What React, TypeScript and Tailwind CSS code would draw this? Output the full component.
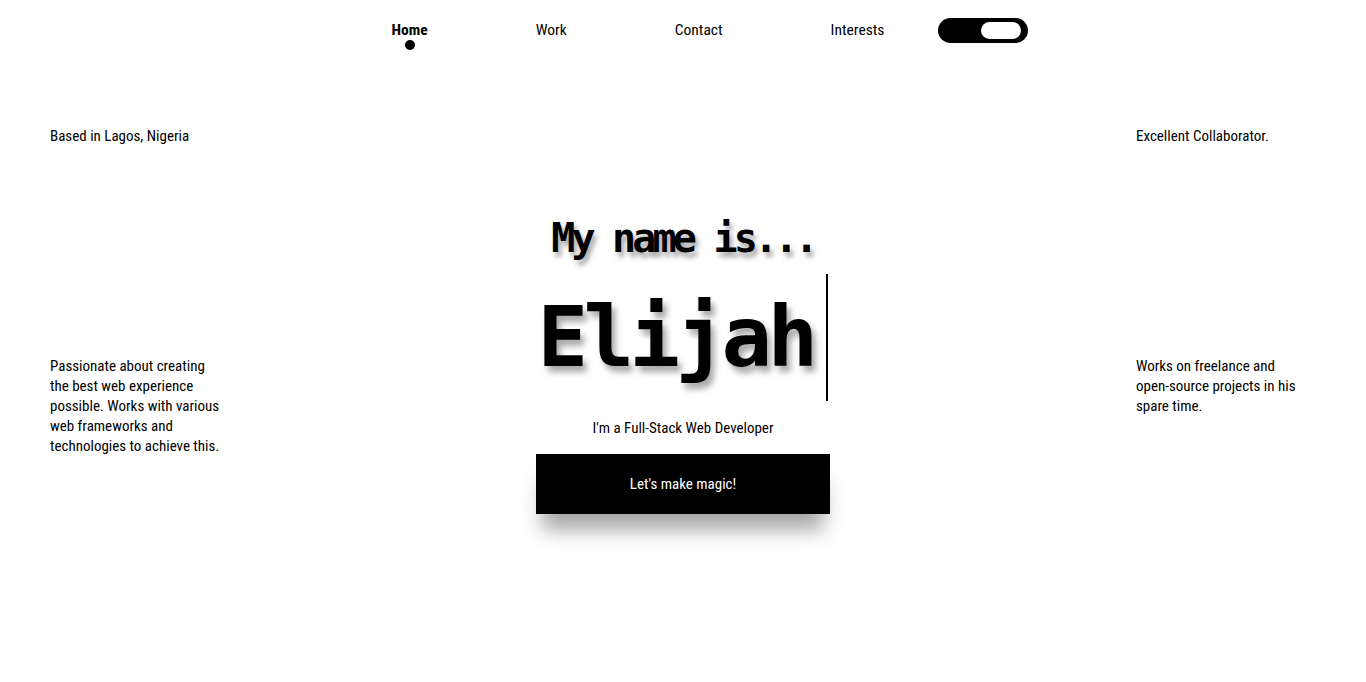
export default function App() {
  const links = ["Home", "Work", "Contact", "Interests"];
  const font = { fontFamily: '"Liberation Sans Narrow", "Roboto Condensed", Roboto, sans-serif' };

  return (
    <div className="min-h-[682px] w-full bg-white text-black" style={font}>
      {/* Nav */}
      <nav className="flex items-center justify-center pt-[18px] pl-[54px]">
        <ul className="flex items-center gap-[108px]">
          {links.map((l, i) => (
            <li key={l} className="relative">
              <a className={`text-[15.5px] leading-[25px] ${i === 0 ? "font-bold" : ""}`}>{l}</a>
              {i === 0 && (
                <span className="absolute left-1/2 top-[22px] h-[10px] w-[10px] -translate-x-1/2 rounded-full bg-black" />
              )}
            </li>
          ))}
        </ul>
        <button className="ml-[54px] flex h-[25px] w-[90px] items-center justify-end rounded-full bg-black pr-[7px]">
          <span className="h-[17px] w-[40px] rounded-full bg-white" />
        </button>
      </nav>

      <main className="grid grid-cols-[1fr_auto_1fr] px-[50px]">
        <div className="flex flex-col pt-[83px] text-[15px] leading-[20px]">
          <p>Based in Lagos, Nigeria</p>
          <p className="mt-[210px]">
            Passionate about creating
            <br />
            the best web experience
            <br />
            possible. Works with various
            <br />
            web frameworks and
            <br />
            technologies to achieve this.
          </p>
        </div>

        <div className="flex flex-col items-center pt-[171px]">
          <h2
            className="text-[40px] font-bold leading-[48px] tracking-[-3.8px]"
            style={{ fontFamily: '"DejaVu Sans Mono", monospace', textShadow: "3px 5px 5px rgba(0,0,0,0.35)" }}
          >
            My name is...
          </h2>
          <div className="mt-[11px] flex items-center">
            <h1
              className="text-[84px] font-bold leading-[128px] tracking-[-4.6px]"
              style={{ fontFamily: '"DejaVu Sans Mono", monospace', textShadow: "4px 6px 6px rgba(0,0,0,0.35)" }}
            >
              Elijah
            </h1>
            <span className="ml-[13px] h-[127px] w-[2px] bg-black" />
          </div>
          <p className="mt-[17px] text-[15px] leading-[20px]">I'm a Full-Stack Web Developer</p>
          <button className="mt-[16px] h-[60px] w-[294px] bg-black text-[15px] text-white shadow-[0_22px_20px_-6px_rgba(0,0,0,0.35)]">
            Let's make magic!
          </button>
        </div>

        <div className="flex flex-col items-end pt-[83px] text-[15px] leading-[20px]">
          <div className="w-[180px]">
            <p>Excellent Collaborator.</p>
            <p className="mt-[210px]">
              Works on freelance and
              <br />
              open-source projects in his
              <br />
              spare time.
            </p>
          </div>
        </div>
      </main>
    </div>
  );
}
